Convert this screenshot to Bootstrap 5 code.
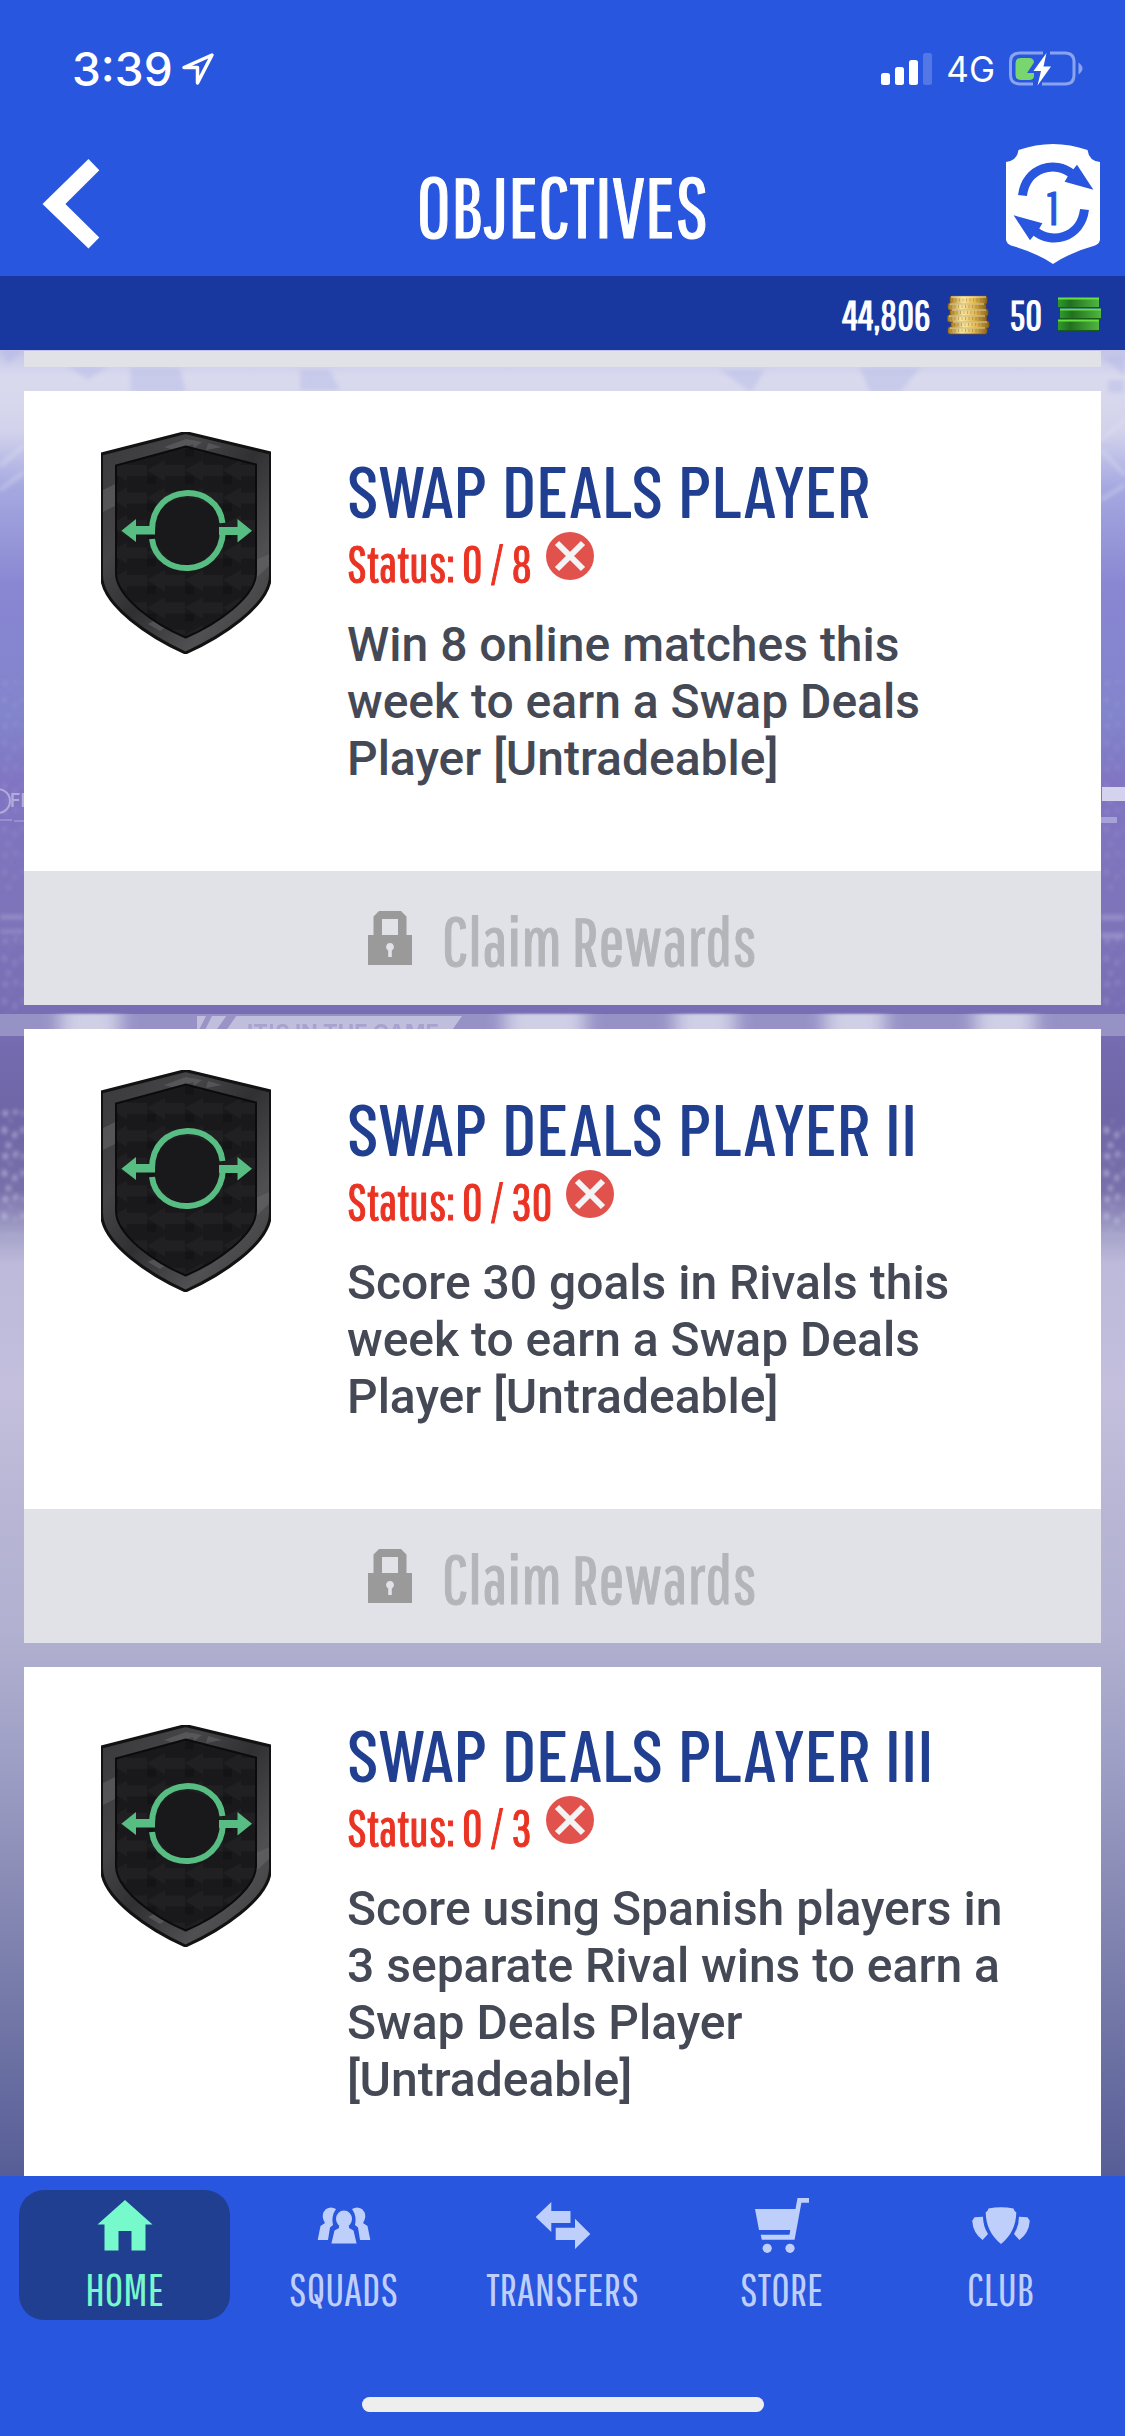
<!DOCTYPE html>
<html lang="en">
<head>
<meta charset="utf-8">
<meta name="viewport" content="width=device-width, initial-scale=1">
<title>Objectives</title>
<link rel="stylesheet" href="https://cdn.jsdelivr.net/npm/bootstrap@5.3.0/dist/css/bootstrap.min.css">
<style>
  body { font-family: Roboto, "Liberation Sans", sans-serif; background: #2956de; }
  .din { font-family: "Pathway Gothic One", "Roboto Condensed", sans-serif; font-weight: 400; -webkit-text-stroke: 1px currentColor; }
  svg { display: block; flex: none; }

  .app-header { background: #2956de; color: #fff; }
  .phone-status { height: 138px; padding: 0 42px 0 72px; font-family: Inter, "Liberation Sans", sans-serif; }
  .phone-time { font-size: 46px; line-height: 48px; font-weight: 500; }
  .phone-net { font-size: 35px; line-height: 36px; padding: 0 14px; }
  .title-row { display: grid; grid-template-columns: 1fr auto 1fr; height: 132px; padding: 0 25px; margin-bottom: 6px; }
  .title-row h1 { font-size: 84px; line-height: 90px; padding-top: 6px; }
  .plain-btn { background: none; border: 0; padding: 0; color: inherit; }
  .back-btn { padding-left: 17px; }
  .funds { background: #18379f; height: 74px; padding: 4px 24px 0; font-size: 41px; line-height: 48px; }

  .feed { position: relative; min-height: 0; overflow: hidden; padding: 1px 24px 0; }
  .stadium { position: absolute; inset: 0; width: 100%; height: 100%; }
  .feed-list { position: relative; gap: 24px; }
  .previous-end { height: 16px; background: #e1e2e7; }
  .objective { border: 0; border-radius: 0; background: #fff; }
  .objective-main { padding: 41px 88px 41px 0; }
  .crest-cell { width: 323px; height: 398px; flex: none; }
  .objective h2 { font-family: "Barlow Condensed", "Roboto Condensed", sans-serif; font-size: 74px; line-height: 90px; font-weight: 500; color: #213f90; white-space: nowrap; }
  .status-line { font-size: 50px; line-height: 60px; height: 60px; color: #ea3323; gap: 14px; }
  .status-line span { padding-bottom: 2px; }
  .status-line svg { margin-bottom: 16px; }
  .objective p { font-size: 48px; line-height: 57px; font-weight: 500; color: #444955; margin: 22px 0 32px; }
  .claim { height: 134px; width: 100%; border: 0; background: #e1e2e7; color: #b4b5b9; font-size: 69px; line-height: 80px; gap: 30px; }
  .claim span { padding-top: 4px; }
  .claim svg { color: #9a9a9a; }

  .tab-bar { background: #2956de; padding: 14px 15px 24px; }
  .tab-bar .nav-item { padding: 0 4px; }
  .tab-bar .nav-link { height: 130px; padding: 6px 0 8px; border-radius: 25px; color: #bfcffb; font-size: 45px; line-height: 46px; gap: 10px; -webkit-text-stroke-width: 0; }
  .tab-bar .nav-link.active { background: #213f90; color: #76facb; }
  .home-bar { width: 402px; height: 15px; margin-top: 77px; border-radius: 8px; background: #eee; }
</style>
</head>
<body class="vh-100 d-flex flex-column overflow-hidden">

<svg width="0" height="0" class="position-absolute" aria-hidden="true">
  <defs>
    <linearGradient id="rim" x1="0" y1="0" x2="1" y2="1">
      <stop offset="0" stop-color="#39393b"/><stop offset=".3" stop-color="#454547"/><stop offset=".5" stop-color="#303032"/><stop offset=".75" stop-color="#505052"/><stop offset="1" stop-color="#3a3a3c"/>
    </linearGradient>
    <pattern id="weave" width="38" height="27.500" patternUnits="userSpaceOnUse" x="147" y="460">
      <rect width="38" height="27.500" fill="#19191b"/>
      <path d="M0 10L18 0v5h20v11H18v5z" fill="#202022"/>
      <path d="M0 20h9" stroke="#141416" stroke-width="8"/>
    </pattern>
    <symbol id="crest" viewBox="101 432 170 222">
      <path d="M185.500 432.500L270.500 453V575C270.500 606 219 638 185.500 653C152 638 101.500 606 101.500 575V454z" fill="url(#rim)" stroke="#121213" stroke-width="3"/>
      <path d="M164 447l22-8 14 3-26 8zM192 440l10 2-8 6zM208 443l14 4-16 3zM103 490l12-6v22l-12 6zM256 560l13-6v12l-13 12zM148 624l16-8 10 6-14 9z" fill="#69696b" opacity=".5"/>
      <path d="M185.700 446.500L256 464.500V573C256 597 217 624 185.700 637.500C154 624 116 597 116 573V465.500z" fill="url(#weave)" stroke="#0b0b0c" stroke-width="2"/>
      <circle cx="187" cy="531" r="33" fill="#19191b"/>
      <g fill="none" stroke="#57bd82" stroke-width="6">
        <path d="M152 530.500C152 482 218 482 222.500 523"/>
        <path d="M152 539C157 579 221 579 223 531"/>
      </g>
      <path d="M121.400 530.700L136 519v7h19v8.500h-19v7.500zM252 530.700L237.500 519v8H219v8h18.500v7.500z" fill="#57bd82"/>
    </symbol>
    <symbol id="cross" viewBox="0 0 48 48">
      <circle cx="24" cy="24" r="24" fill="#e2524c"/>
      <path d="M11 11L37 37M37 11L11 37" stroke="#f4f4f4" stroke-width="6"/>
    </symbol>
    <symbol id="lock" viewBox="0 0 44 54">
      <path fill="currentColor" fill-rule="evenodd" d="M0 24h5.500V5.500L11 0h22l5.500 5.500V24H44v30H0zM14 8v16h16V8zM22 32a4 4 0 0 0-1.800 7.500V46h3.600v-6.500A4 4 0 0 0 22 32z"/>
    </symbol>
  </defs>
</svg>

<header class="app-header">
  <div class="phone-status d-flex align-items-center justify-content-between">
    <div class="d-flex align-items-center gap-2">
      <span class="phone-time">3:39</span>
      <svg width="34" height="34" viewBox="0 0 34 34" fill="none" stroke="#fff" stroke-width="3.500" stroke-linejoin="round"><path d="M31 3L3 15.500h13.500V31z"/></svg>
    </div>
    <div class="d-flex align-items-center">
      <svg width="51" height="34" viewBox="0 0 51 34" fill="#fff"><rect y="21" width="9" height="12" rx="2.500"/><rect x="14" y="15" width="9" height="18" rx="2.500"/><rect x="28" y="8" width="9" height="25" rx="2.500"/><rect x="42" y="1" width="9" height="32" rx="2.500" opacity=".2"/></svg>
      <span class="phone-net">4G</span>
      <svg width="74" height="36" viewBox="0 0 74 36">
        <path d="M34 2H11Q1.500 2 1.500 11v13q0 9 9.500 9h13M41 2h15q9 0 9 9v13q0 9-9 9H33" fill="none" stroke="#8aa3ee" stroke-width="3"/>
        <path d="M69.500 11.500q8 6 0 12z" fill="#8aa3ee"/>
        <path d="M12 7h8q5 0 5 4.500L18 22h7v3q0 4-5 4h-8q-5.500 0-5.500-5V12q0-5 5.500-5z" fill="#79d66f"/>
        <path d="M37.500 2L24.500 20H32L28.500 34.500L42 15.500H34.500z" fill="#fff"/>
      </svg>
    </div>
  </div>
  <div class="title-row align-items-center">
    <button type="button" class="plain-btn back-btn text-start" aria-label="Back">
      <svg width="58" height="90" viewBox="0 0 58 90" fill="#fff"><path d="M46.500 0L57.300 11.300L23.400 45L57.300 78.500L46.500 89.500L.500 45z"/></svg>
    </button>
    <h1 class="din m-0">OBJECTIVES</h1>
    <button type="button" class="plain-btn ms-auto" aria-label="Swap items">
      <svg width="94" height="120" viewBox="0 0 94 120">
        <path d="M12.500 6Q47-6 81.500 6Q83 17 94 18V96Q93 100 89 101.500Q65 108 47 120Q29 108 5 101.500Q1 100 0 96V18Q11 17 12.500 6z" fill="#fff"/>
        <g id="swapHalf"><path d="M16.500 51.500C20 23 50 16 66 30" fill="none" stroke="#2956de" stroke-width="9"/><path d="M71 20.700L87.400 45.700L58.600 37.700L62 32L67.600 25z" fill="#2956de"/></g>
        <use href="#swapHalf" transform="rotate(180 47.500 58.500)"/>
        <text x="47" y="81" text-anchor="middle" font-size="47" fill="#2956de" stroke="#2956de" class="din">1</text>
      </svg>
    </button>
  </div>
  <div class="funds din d-flex align-items-center justify-content-end gap-3">
    <span>44,806</span>
    <svg class="me-1" width="43" height="40" viewBox="0 0 43 40">
      <defs><linearGradient id="gold"><stop offset="0" stop-color="#a87a20"/><stop offset=".35" stop-color="#f8e7a0"/><stop offset=".65" stop-color="#e3bb52"/><stop offset="1" stop-color="#8e6418"/></linearGradient></defs>
      <g fill="url(#gold)" stroke="#7b5818" stroke-width=".700"><rect x="1" y="32" width="39" height="7" rx="2"/><rect x="4" y="26" width="38" height="7" rx="2"/><rect x=".500" y="20" width="39" height="7" rx="2"/><rect x="3" y="14" width="38" height="7" rx="2"/><rect x="1" y="8" width="38" height="7" rx="2"/><rect x="3" y="1" width="37" height="8" rx="2"/></g>
      <path d="M5 5h32M4 11.500h32M6 17.500h32M4 23.500h32M7 29.500h32M4 35.500h32" stroke="#9a7428" stroke-width="3" stroke-dasharray="1 2.500" opacity=".45"/>
      <path d="M4 2h35M3 9h34M5 15h34M2 21h36M6 27h34M3 33h35" stroke="#fff5c8" opacity=".8"/>
    </svg>
    <span>50</span>
    <svg width="43" height="36" viewBox="0 0 43 36">
      <defs><linearGradient id="cash"><stop offset="0" stop-color="#2f9a2a"/><stop offset=".3" stop-color="#236f20"/><stop offset="1" stop-color="#4fb73e"/></linearGradient></defs>
      <g fill="url(#cash)"><rect y="1" width="41" height="10"/><rect x="2" y="12" width="41" height="10"/><rect y="23" width="41" height="11"/></g>
      <path d="M0 1.500h41M2 12.500h41M0 23.500h41" stroke="#66e040" stroke-width="2"/><path d="M0 10.500h41M2 21.500h41M0 33.500h41" stroke="#175c18"/>
    </svg>
  </div>
</header>

<main class="feed flex-grow-1">
  <svg class="stadium" viewBox="0 0 1125 1826" preserveAspectRatio="none" aria-hidden="true">
    <defs>
      <linearGradient id="sky" x1="0" y1="0" x2="0" y2="1">
        <stop offset="0" stop-color="#c3c5e8"/><stop offset=".015" stop-color="#dadaee"/><stop offset=".045" stop-color="#d2d2ec"/><stop offset=".075" stop-color="#a5a9e0"/><stop offset=".13" stop-color="#8986d2"/><stop offset=".2" stop-color="#8284cc"/><stop offset=".24" stop-color="#8074c2"/><stop offset=".31" stop-color="#7d74ba"/><stop offset=".36" stop-color="#786eb5"/><stop offset=".42" stop-color="#6e66a6"/><stop offset=".46" stop-color="#7870aa"/><stop offset=".485" stop-color="#a6a4ca"/><stop offset=".5" stop-color="#bcb9da"/><stop offset=".57" stop-color="#c3bfdd"/><stop offset=".64" stop-color="#b8b5d4"/><stop offset=".7" stop-color="#b2b1d1"/><stop offset=".78" stop-color="#9c9dc4"/><stop offset=".87" stop-color="#8083af"/><stop offset="1" stop-color="#575e97"/>
      </linearGradient>
      <pattern id="crowd" width="19" height="43" patternUnits="userSpaceOnUse"><path d="M3 2l4 3-1 5-4-2zM13 9l3-2 1 5-4 3zM7 18l4 2-1 4-4-1zM15 27l3 1-2 6-3-2zM2 31l5-2 1 4-3 3zM9 38l3 1-1 3z" fill="#cbc9e8"/></pattern>
      <filter id="soft"><feGaussianBlur stdDeviation="2"/></filter>
      <filter id="softer"><feGaussianBlur stdDeviation="9 1"/></filter>
    </defs>
    <rect width="1125" height="1826" fill="url(#sky)"/>
    <g filter="url(#soft)">
      <path d="M0 0h24L8 14zM68 16h40l-20 14zM130 18h50l6 24h-55zM300 20h30l10 20h-40zM720 20h45l-14 22zM860 18h60l-20 24h-30zM1101 6h24v20zM1108 30h16v12h-16z" fill="#a9aee4" opacity=".35"/>
      <path d="M0 116L24 96M0 140L24 122M1101 90L1125 70M1101 100L1125 125M1101 150L1125 135" stroke="#e4e3f4" stroke-width="3" opacity=".5"/>
      <path d="M0 330h24v210H0zM1101 330h24v210h-24z" fill="url(#crowd)" opacity=".18"/>
      <path d="M0 585h24v80H0zM1101 585h24v70h-24z" fill="url(#crowd)" opacity=".28"/>
      <path d="M0 760h24v110H0zM1101 770h24v110h-24z" fill="url(#crowd)" opacity=".75"/>
      <path d="M0 565h24v4H0zM1101 565h24v5h-24zM0 580h24v3H0zM1101 583h24v5h-24zM0 884h24v2H0zM1101 884h24v2h-24z" fill="#bdb9df" opacity=".45"/>
    </g>
    <rect x="1102" y="437" width="23" height="14" fill="#d4d3ed"/><rect x="1101" y="467" width="16" height="6" fill="#a6a1d7"/>
    <g fill="#b9b5df" opacity=".85"><circle cx="-2" cy="451" r="12" fill="none" stroke="#b9b5df" stroke-width="2"/><text x="10" y="457" font-size="18" font-family="Inter, sans-serif" font-weight="600">FIFA</text><rect y="469" width="12" height="2" opacity=".5"/><rect x="14" y="470" width="10" height="2" opacity=".5"/></g>
    <rect y="664" width="1125" height="22" fill="#9692c6"/>
    <g fill="#cfcfe6" filter="url(#softer)"><path d="M60 664h60v18H60zM505 664h80v18h-80zM675 664h60v18h-60zM825 664h60v18h-60zM975 664h60v18h-60z"/></g>
    <path d="M197 666h265l-14 20H197z" fill="#c0bedd"/>
    <path d="M215 682l12-17h10l-12 17zM198 682l8-16h6l-8 16z" fill="#9a94c6"/>
    <text x="247" y="690" font-size="22" font-family="Inter, sans-serif" font-weight="700" fill="#a7a3ce">IT'S IN THE GAME</text>
  </svg>

  <div class="feed-list d-flex flex-column">
    <div class="previous-end"></div>

    <section class="objective card">
      <div class="objective-main d-flex align-items-center">
        <div class="crest-cell d-flex justify-content-center"><svg width="170" height="222"><use href="#crest"/></svg></div>
        <div class="flex-grow-1">
          <h2 class="m-0">SWAP DEALS PLAYER</h2>
          <div class="status-line din d-flex align-items-center"><span>Status: 0 / 8</span><svg width="48" height="48"><use href="#cross"/></svg></div>
          <p>Win 8 online matches this week to earn a Swap Deals Player [Untradeable]</p>
        </div>
      </div>
      <button type="button" class="claim din d-flex align-items-center justify-content-center" disabled><svg width="44" height="54"><use href="#lock"/></svg><span>Claim Rewards</span></button>
    </section>

    <section class="objective card">
      <div class="objective-main d-flex align-items-center">
        <div class="crest-cell d-flex justify-content-center"><svg width="170" height="222"><use href="#crest"/></svg></div>
        <div class="flex-grow-1">
          <h2 class="m-0">SWAP DEALS PLAYER II</h2>
          <div class="status-line din d-flex align-items-center"><span>Status: 0 / 30</span><svg width="48" height="48"><use href="#cross"/></svg></div>
          <p>Score 30 goals in Rivals this week to earn a Swap Deals Player [Untradeable]</p>
        </div>
      </div>
      <button type="button" class="claim din d-flex align-items-center justify-content-center" disabled><svg width="44" height="54"><use href="#lock"/></svg><span>Claim Rewards</span></button>
    </section>

    <section class="objective card">
      <div class="objective-main d-flex align-items-center">
        <div class="crest-cell d-flex justify-content-center"><svg width="170" height="222"><use href="#crest"/></svg></div>
        <div class="flex-grow-1">
          <h2 class="m-0">SWAP DEALS PLAYER III</h2>
          <div class="status-line din d-flex align-items-center"><span>Status: 0 / 3</span><svg width="48" height="48"><use href="#cross"/></svg></div>
          <p>Score using Spanish players in 3 separate Rival wins to earn a Swap Deals Player [Untradeable]</p>
        </div>
      </div>
    </section>
  </div>
</main>

<footer class="tab-bar">
  <nav class="nav nav-fill nav-justified flex-nowrap din">
    <div class="nav-item"><a href="#" class="nav-link active d-flex flex-column align-items-center">
      <svg width="60" height="60" fill="currentColor"><path d="M30 4L57.500 28.500H50.500V54.500H36.500V35H23.500V54.500H9.500V28.500H2.500z"/></svg>HOME</a></div>
    <div class="nav-item"><a href="#" class="nav-link d-flex flex-column align-items-center">
      <svg width="60" height="60" fill="currentColor"><ellipse cx="30" cy="23" rx="8" ry="8.500"/><path d="M25 30h10v2l4.500 2.500L42.600 47.500H17.400L20.500 34.500L25 32z"/><path id="mate" d="M22 13Q17 10 12 13Q7 18 9.500 24L11 27L6.500 30L3.700 44H14L16 31.500L19 29Q17 20 22 13z"/><use href="#mate" transform="matrix(-1 0 0 1 60 0)"/></svg>SQUADS</a></div>
    <div class="nav-item"><a href="#" class="nav-link d-flex flex-column align-items-center">
      <svg width="60" height="60" fill="currentColor"><path d="M2.700 21L18.300 6v9h19.200v12H18.300v9zM57.300 38L42 22.700v9H22.700V44H42v9z"/></svg>TRANSFERS</a></div>
    <div class="nav-item"><a href="#" class="nav-link d-flex flex-column align-items-center">
      <svg width="60" height="60" fill="currentColor"><path d="M3 13H43.500L45.500 2H57V6.700H49.400L42.600 43.700H9.800L8.700 38.700H37.500L38.300 34H7z"/><circle cx="15.200" cy="52.300" r="4.600"/><circle cx="38" cy="52.300" r="4.600"/></svg>STORE</a></div>
    <div class="nav-item"><a href="#" class="nav-link d-flex flex-column align-items-center">
      <svg width="60" height="60" fill="currentColor"><path d="M17.500 12.500Q30 10 42.500 12.500Q43 15 45.300 16.300Q45 36 30 48Q15 36 14.700 16.300Q17 15 17.500 12.500z"/><path id="wing" d="M3.500 21.300L12 20.700Q12 30 17 38L11.600 44Q2 37 1.200 24.700z"/><use href="#wing" transform="matrix(-1 0 0 1 60 0)"/></svg>CLUB</a></div>
  </nav>
  <div class="home-bar mx-auto"></div>
</footer>
<script src="https://cdn.jsdelivr.net/npm/bootstrap@5.3.0/dist/js/bootstrap.bundle.min.js"></script>
</body>
</html>
